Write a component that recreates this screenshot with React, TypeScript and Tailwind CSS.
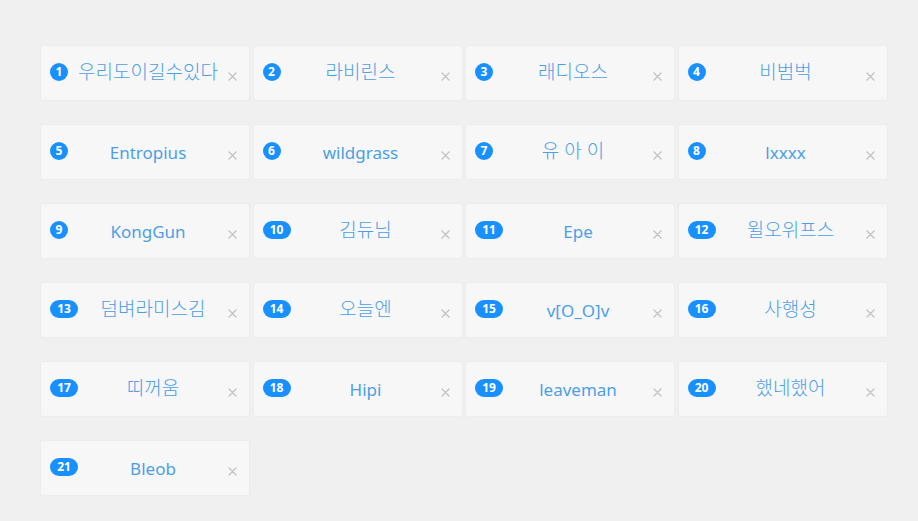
import React from 'react';

const names = [
  '우리도이길수있다',
  '라비린스',
  '래디오스',
  '비범벅',
  'Entropius',
  'wildgrass',
  '유 아 이',
  'lxxxx',
  'KongGun',
  '김듀님',
  'Epe',
  '윌오위프스',
  '덤벼라미스김',
  '오늘엔',
  'v[O_O]v',
  '사행성',
  '띠꺼움',
  'Hipi',
  'leaveman',
  '했네했어',
  'Bleob',
];

const CloseIcon: React.FC = () => (
  <svg width="9" height="9" viewBox="0 0 9 9" className="shrink-0 mt-[7px]">
    <path d="M1 1L8 8M8 1L1 8" stroke="#c4c4c4" strokeWidth="1.4" strokeLinecap="round" />
  </svg>
);

interface TeamCardProps {
  index: number;
  name: string;
}

const TeamCard: React.FC<TeamCardProps> = ({ index, name }) => {
  const wide = index >= 10;
  // Hangul renders a bit larger and thinner in the original font
  const hangul = /[\uAC00-\uD7A3]/.test(name);
  return (
    <div className="h-[56px] flex items-center pl-[9px] pr-[12px] bg-[#f7f7f7] border border-[#ececec] rounded-[3px]">
      {/* Number badge */}
      <span
        className={`h-[18px] ${wide ? 'w-[28px]' : 'w-[18px]'} -mt-[2px] shrink-0 rounded-full bg-[#1890ff] text-white text-[12px] font-bold flex items-center justify-center leading-none`}
      >
        {index}
      </span>
      {/* Name */}
      <span
        className={`flex-1 text-center ${hangul ? 'text-[19px] font-light -mt-[2px]' : 'text-[17px]'} text-[#4d9fe4] leading-none whitespace-nowrap`}
      >
        {name}
      </span>
      <CloseIcon />
    </div>
  );
};

export default function App() {
  return (
    <div
      className="min-h-[521px] w-full bg-[#f0f0f0] pt-[45px] pl-[40px]"
      style={{ fontFamily: '"Noto Sans", "Noto Sans CJK KR", sans-serif' }}
    >
      <div className="w-[850px] grid grid-cols-4 gap-y-[23px]">
        {names.map((name, i) => (
          <div key={i} className="pr-[2.5px]">
            <TeamCard index={i + 1} name={name} />
          </div>
        ))}
      </div>
    </div>
  );
}
